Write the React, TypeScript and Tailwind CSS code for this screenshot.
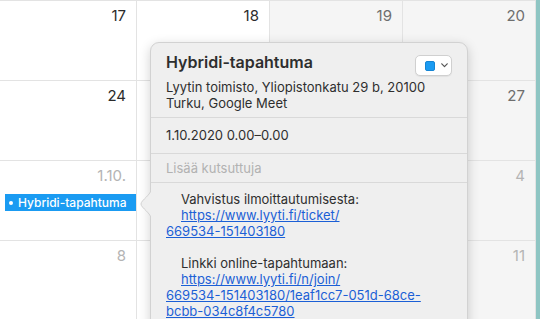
import React from 'react';

type Cell = { label?: string; tone: 'dark' | 'mid' | 'light'; weekend?: boolean };

// cells under the popover carry no label, they are covered anyway
const rows: Cell[][] = [
  [{ label: '17', tone: 'dark' }, { label: '18', tone: 'dark' }, { label: '19', tone: 'mid', weekend: true }, { label: '20', tone: 'mid', weekend: true }],
  [{ label: '24', tone: 'dark' }, { tone: 'dark' }, { tone: 'mid', weekend: true }, { label: '27', tone: 'mid', weekend: true }],
  [{ label: '1.10.', tone: 'light' }, { tone: 'light' }, { tone: 'light', weekend: true }, { label: '4', tone: 'light', weekend: true }],
  [{ label: '8', tone: 'light' }, { tone: 'light' }, { tone: 'light', weekend: true }, { label: '11', tone: 'light', weekend: true }],
];

const toneClass = {
  dark: 'text-[#2b2b2b]',
  mid: 'text-[#6e6e6e]',
  light: 'text-[#b4b4b4]',
};

const Popover: React.FC = () => (
  <div className="absolute left-[150px] top-[42px] w-[318px] h-[300px] rounded-[9px] bg-[#efefef] border border-[#d2d2d2] shadow-[0_3px_12px_rgba(0,0,0,0.18)] text-[#2e2e2e]">
    <svg className="absolute left-[-11px] top-[145px]" width="12" height="32" viewBox="0 0 12 32">
      <path d="M11.5 0 C11.5 7, 1 12, 1 16 C1 20, 11.5 25, 11.5 32" fill="#efefef" stroke="#d2d2d2" strokeWidth="1" />
      <rect x="11" y="0" width="2" height="32" fill="#efefef" />
    </svg>

    <div className="px-[15px] pt-[9px] pb-[6px]">
      <div className="flex items-start justify-between">
        <div className="text-[16px] leading-[20px] font-semibold">Hybridi-tapahtuma</div>
        <div className="mt-[3px] flex items-center gap-[6px] h-[21px] w-[37px] pl-[9px] rounded-[5px] bg-white border border-[#d0d0d0] shadow-[0_1px_1px_rgba(0,0,0,0.06)]">
          <div className="w-[10px] h-[10px] rounded-[2px] bg-[#1a9bf2] border border-[#1585d4]" />
          <svg width="7" height="5" viewBox="0 0 7 5">
            <path d="M0.8 0.8 L3.5 3.6 L6.2 0.8" fill="none" stroke="#555" strokeWidth="1.2" strokeLinecap="round" strokeLinejoin="round" />
          </svg>
        </div>
      </div>
      <div className="mt-[3px] text-[13px] leading-[16px]">
        Lyytin toimisto, Yliopistonkatu 29 b, 20100
        <br />
        Turku, Google Meet
      </div>
    </div>

    <div className="border-t border-[#d9d9d9] px-[15px] pt-[9px] pb-[10px] text-[13px] leading-[16px]">1.10.2020 0.00–0.00</div>

    <div className="border-t border-[#d9d9d9] px-[15px] pt-[6px] pb-[6px] text-[13px] leading-[16px] text-[#b2b2b2]">Lisää kutsuttuja</div>

    <div className="border-t border-[#d9d9d9] px-[15px] pt-[8px] text-[13px] leading-[16px]">
      <div className="pl-[15px]">Vahvistus ilmoittautumisesta:</div>
      <a className="text-[#1b5fd6] underline">
        <span className="pl-[15px]">https://www.lyyti.fi/ticket/</span>
        <br />
        669534-151403180
      </a>
      <div className="h-[16px]" />
      <div className="pl-[15px]">Linkki online-tapahtumaan:</div>
      <a className="text-[#1b5fd6] underline">
        <span className="pl-[15px]">https://www.lyyti.fi/n/join/</span>
        <br />
        669534-151403180/1eaf1cc7-051d-68ce-
        <br />
        bcbb-034c8f4c5780
      </a>
    </div>
  </div>
);

export default function App() {
  return (
    <div className="relative w-[541px] h-[319px] overflow-hidden bg-white flex font-['Inter','Noto_Sans',sans-serif]">
      <div className="grid grid-cols-[137px_133px_133px_133px] grid-rows-[80px_80px_80px_80px] border-t border-[#e3e3e3]">
        {rows.map((row, r) =>
          row.map((cell, c) => (
            <div
              key={`${r}-${c}`}
              className={`relative border-b border-r border-[#e3e3e3] ${cell.weekend ? 'bg-[#f5f5f5]' : 'bg-white'}`}
            >
              <div className={`h-[18px] text-right pr-[10px] mt-[6px] text-[15px] leading-[18px] ${toneClass[cell.tone]}`}>{cell.label}</div>
              {r === 2 && c === 0 && (
                <div className="mt-[9px] ml-[5px] h-[17px] bg-[#1a9bf2] text-white text-[12px] leading-[17px] font-medium pl-[4px] flex items-center gap-[5px]">
                  <span className="w-[4px] h-[4px] rounded-full bg-white" />
                  <span>Hybridi-tapahtuma</span>
                </div>
              )}
            </div>
          ))
        )}
      </div>
      <div className="w-[4px] bg-[#8ec5c3]" />
      <Popover />
    </div>
  );
}
